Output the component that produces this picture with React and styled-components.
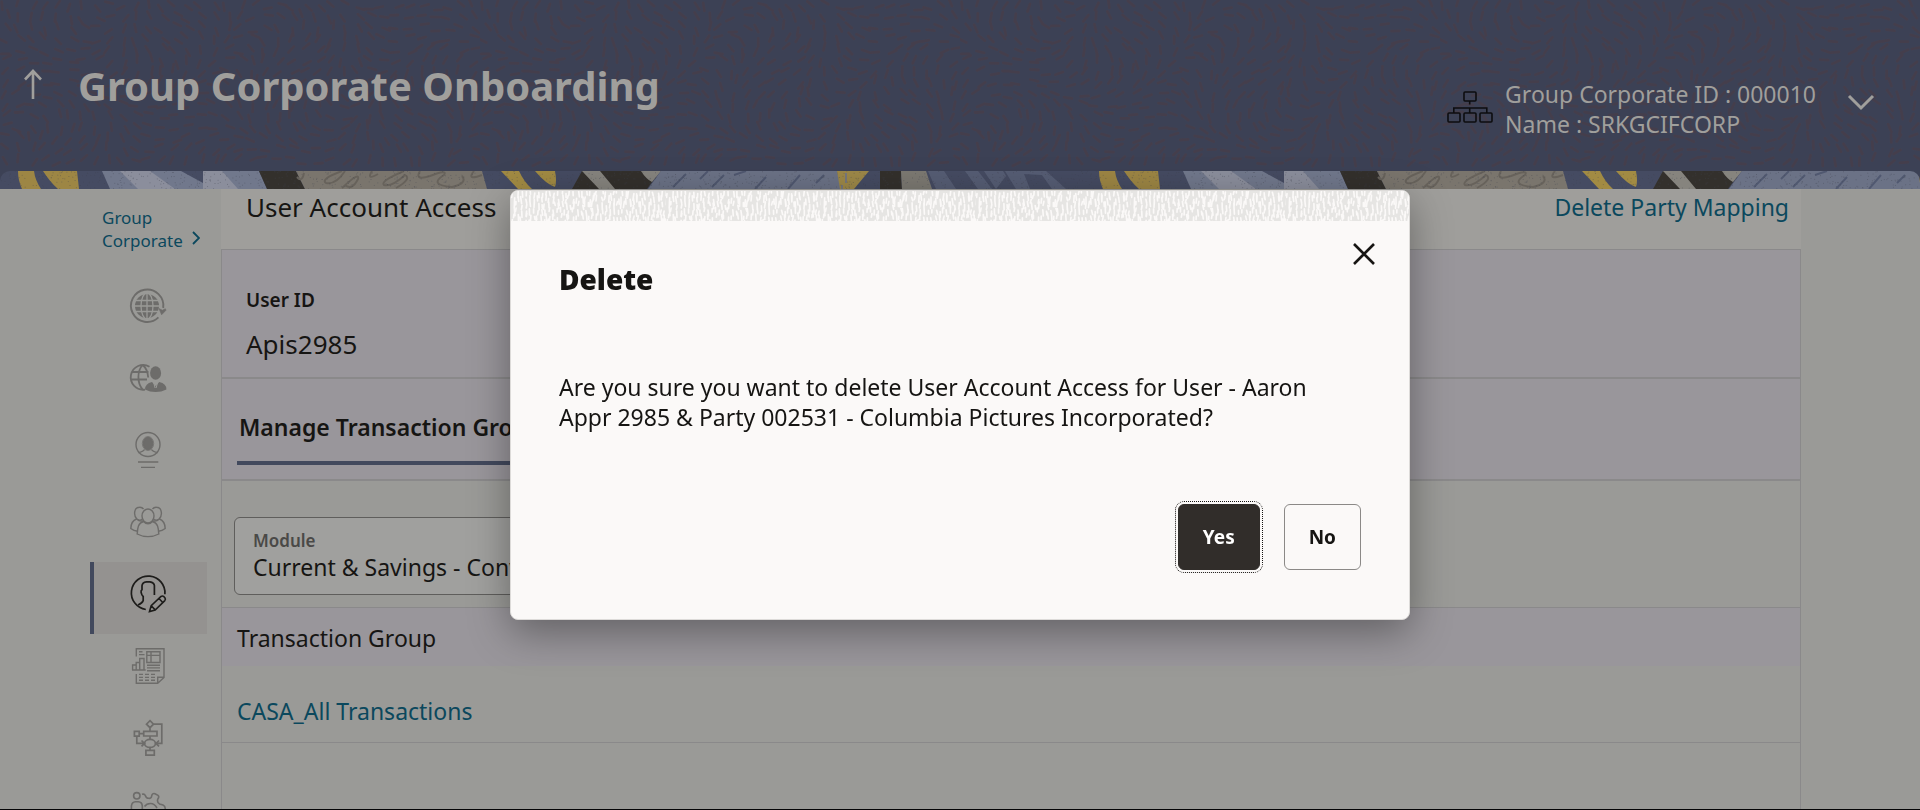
import React, { useState } from 'react';
import styled, { createGlobalStyle, ThemeProvider } from 'styled-components';

const theme = {
  color: {
    header: '#3c4155',
    onHeader: '#a09f9c',
    page: '#9a9a97',
    surface: '#9f9e9b',
    field: '#a0a09e',
    lilac: '#99969b',
    active: '#949290',
    line: '#8a898a',
    text: '#161513',
    muted: '#4a4947',
    icon: '#6d6c6a',
    link: '#0b485d',
    accent: '#42495d',
    dialog: '#fbf9f8',
    dark: '#312d2a',
  },
};

// small seeded generator, keeps the textures the same on every render
const random = (seed) => {
  let s = seed;
  return () => {
    s = (s * 16807) % 2147483647;
    return s / 2147483647;
  };
};

const headerStrokes = () => {
  const next = random(11);
  let d = '';
  for (let y = 6; y < 171; y += 11) {
    for (let x = 6; x < 480; x += 13) {
      const px = x + next() * 8 - 4;
      const py = y + next() * 8 - 4;
      const angle = Math.sin(x / 38) * 1.4 + Math.cos(y / 30 + x / 76) * 1.3;
      const dx = Math.cos(angle) * 4;
      const dy = Math.sin(angle) * 4;
      d += `M${(px - dx).toFixed(1)} ${(py - dy).toFixed(1)}L${(px + dx).toFixed(1)} ${(py + dy).toFixed(1)}`;
    }
  }
  return d;
};

const dialogStrokes = () => {
  const next = random(7);
  let d = '';
  for (let y = -2; y < 32; y += 6) {
    for (let x = 1; x < 155; x += 4) {
      const px = x + next() * 3;
      const py = y + next() * 5;
      const lean = next() * 2 - 1;
      d += `M${px.toFixed(1)} ${py.toFixed(1)}l${lean.toFixed(1)} ${(3 + next() * 4).toFixed(1)}`;
    }
  }
  return d;
};

const speckles = () => {
  const next = random(23);
  let d = '';
  for (let i = 0; i < 900; i += 1) {
    d += `M${(next() * 1081).toFixed(1)} ${(next() * 18).toFixed(1)}h1`;
  }
  return d;
};

const HeaderTexture = () => (
  <Texture width="100%" height="100%" aria-hidden="true">
    <defs>
      <pattern id="strokes" width="480" height="171" patternUnits="userSpaceOnUse">
        <path d={headerStrokes()} stroke="#443e4c" strokeWidth="2.8" strokeLinecap="round" />
      </pattern>
    </defs>
    <rect width="100%" height="100%" fill="url(#strokes)" />
  </Texture>
);

const BandArt = () => (
  <svg width="100%" height="18" aria-hidden="true">
    <defs>
      <pattern id="band" width="1081" height="18" patternUnits="userSpaceOnUse">
        <rect width="1081" height="18" fill="#454b62" />
        <path d="M18 0H34Q35 9 41 18H22Q18 9 18 0ZM43 0H77L79 18H58Q50 11 43 0Z" fill="#9d8644" />
        <path d="M102 0H259L267 18H110Z" fill="#71788c" />
        <path d="M120 0H150L175 18H138ZM203 0H222L238 18H203Z" fill="#8b8e9c" />
        <path d="M181 0H203V12Z" fill="#454b62" />
        <path d="M259 0H296L305 18H267Z" fill="#33302c" />
        <path d="M296 0H482L487 18H305Z" fill="#7a756d" />
        <g fill="none" stroke="#67625b" strokeWidth="2">
          <path d="M304 2Q302 12 297 6M345 0Q336 14 326 12Q320 8 342 0M342 17Q360 0 358 8Q352 20 345 14M372 0Q366 10 378 3M404 0Q380 10 384 14Q392 16 405 4Q412 8 396 17M420 0Q414 10 430 5Q448 -2 444 4Q428 14 452 16Q468 12 462 5M474 0Q466 10 482 4" />
        </g>
        <path d="M501 0H519Q524 11 532 18H518ZM535 0H555Q557 10 555 16Q546 13 535 0Z" fill="#a28b43" />
        <path d="M582 0H660L647 18H572Z" fill="#33302c" />
        <path d="M582 0H600L615 18H599ZM641 0H661L652 11Q646 8 641 0Z" fill="#86847e" />
        <path d="M661 0H837L841 18H648Z" fill="#6b7286" />
        <path d="M686 3L673 16M724 4L712 16M746 0L734 4M766 6L755 18M800 4L788 18M824 4L816 12M708 0L700 8" stroke="#505870" strokeWidth="2" />
        <path d="M837 0H869L854 18H840Z" fill="#9d8848" />
        <path d="M846 2V12M842 14V18" stroke="#77777c" strokeWidth="2" />
        <path d="M880 0H901L902 18H880Z" fill="#33302c" />
        <path d="M901 0H926L932 18H902Z" fill="#7c7972" />
        <path d="M928 0H944L956 18H936ZM965 0H978L992 18H978ZM984 0H1003L1006 5L996 18ZM1005 0H1046L1066 18H1052L1042 4L1024 3L1030 18H1016Z" fill="#565d74" />
        <path d={speckles()} stroke="#3a3d4a" strokeWidth="1" opacity="0.35" />
      </pattern>
    </defs>
    <rect width="100%" height="18" fill="url(#band)" />
  </svg>
);

const DialogBand = () => (
  <svg width="100%" height="30" aria-hidden="true">
    <defs>
      <pattern id="weave" width="155" height="30" patternUnits="userSpaceOnUse">
        <rect width="155" height="30" fill="#e6e5e3" />
        <path d={dialogStrokes()} stroke="#fbf9f8" strokeWidth="1.7" strokeLinecap="round" />
      </pattern>
    </defs>
    <rect width="100%" height="30" fill="url(#weave)" />
  </svg>
);

const OrgIcon = () => (
  <svg width="46" height="33" viewBox="0 0 46 33" fill="none" stroke="#0d0d0f" strokeWidth="1.6" aria-hidden="true">
    <rect x="17" y="2" width="12" height="9" rx="1" />
    <rect x="1" y="23" width="12" height="9" rx="1" />
    <rect x="17" y="23" width="12" height="9" rx="1" />
    <rect x="33" y="23" width="12" height="9" rx="1" />
    <path d="M22.7 11v3.4M6.8 23v-5h33v5M22.7 18v5" />
  </svg>
);

const icons = {
  globe: (
    <>
      <circle cx="17" cy="18" r="12" fill="currentColor" stroke="none" />
      <path d="M5 12.5h24M5 18h24M5 23.5h24M17 6v24" stroke="#9a9a97" strokeWidth="1.3" />
      <ellipse cx="17" cy="18" rx="6" ry="13" stroke="#9a9a97" strokeWidth="1.3" />
      <path d="M28.4 29.4A16.2 16.2 0 1 1 33.2 20" strokeWidth="1.9" />
      <path d="M29 20.6l3.400 1.600 3-1.400.6 1.400-4.400 4.600z" fill="currentColor" strokeWidth="0.6" />
    </>
  ),
  globeUser: (
    <>
      <path d="M19.5 6.7A12.4 12.4 0 1 0 15 29.6M12.6 5C7 11 7 23 12.6 29.6M12.6 5q5 4 5.6 12.5M2.5 12h16M1 19.5h16" strokeWidth="1.8" />
      <ellipse cx="25.6" cy="13" rx="5.500" ry="6.800" fill="currentColor" stroke="none" />
      <path d="M15 29.5q0-6 7-7.500l3.600 4 3.600-4q7.400 1.500 7.200 7.500-5 2.500-10.800 2.500T15 29.500z" fill="currentColor" stroke="none" />
      <path d="M23.500 22l1.600 6M27.700 22l-1.600 6" stroke="#9a9a97" strokeWidth="1" />
    </>
  ),
  profile: (
    <>
      <circle cx="18" cy="12.500" r="12" />
      <ellipse cx="18" cy="11.500" rx="4.600" ry="6" fill="currentColor" />
      <ellipse cx="18" cy="11.500" rx="5.700" ry="7" strokeWidth="0.7" />
      <path d="M14.500 17.500q-1 2-6 3.200M21.500 17.500q1 2 6 3.200M8 30h20.300M11 35.400h14" />
    </>
  ),
  group: (
    <>
      <ellipse cx="18" cy="12" rx="6" ry="7" />
      <path d="M13.500 17.500C8 19 7.600 24 7.200 30q5 2.600 10.800 2.600t10.800-2.600c-.4-6-.8-11-6.300-12.500q-4.500 4.600-9 0z" />
      <path d="M13.500 5Q12 3 9.500 3.200C3.500 3.500 3.500 12 7 15.200q2.300 1.600 5.300.3M22.500 5Q24 3 26.500 3.200c6 .3 6 8.800 2.500 12q-2.300 1.600-5.300.3" />
      <path d="M6.500 15Q1 17 .8 24.500q3 2.500 6.800 2.700M29.500 15q5.500 2 5.700 9.500-3 2.500-6.800 2.700M7 15q2.500 3 6 1.800M29 15q-2.500 3-6 1.800" />
    </>
  ),
  editUser: (
    <>
      <path d="M15.800 33.500A16.800 16.800 0 1 1 34.900 18.300" strokeWidth="1.700" />
      <path d="M24.400 19V9.500Q24 6.500 20 5.800h-3.500q-4.300.5-4.500 4v4q-1.200.5-.9 2.500.6 3 2.100 4.200v4Q12.500 27 8 29" strokeWidth="1.700" />
      <path d="M19.500 35.500l1.700-5.800L31 20.500q1.500-1 3 .2l1 1.200q.9 1.400-.2 2.700L25.200 34zM21.200 29.700l4 4.200M29 22.500l4 4.200" strokeWidth="1.600" />
    </>
  ),
  report: (
    <>
      <path d="M6.300 8.500V.8H34v28.700L27.700 35.300H6.300V26M27.700 35v-5.700h6" />
      <path d="M2.600 22v-5h3.600v5M6.200 17v-2.500h3.500V22M9.700 15v-4.500H14V22M2 22h13.700" />
      <path d="M16.800 3.800H30V14.500H16.800zM16.800 7.400H30M21 3.800v10.700M9 3.800h3.500M9 6.600h5.500M17 17.200h13M17 19.900h13M17 22.700h13" />
      <path d="M9 26.400h17M9 29.400h17M9 32.300h17" strokeDasharray="4 2" />
    </>
  ),
  flow: (
    <g strokeWidth="1.700">
      <path d="M20 .7L23.500 4.200 20 7.700 16.500 4.200zM20 8v3.400M13.700 11.400H27v4.600H13.700zM4.400 11.400h4.800v4.800H4.400zM9.200 13.700h4.500M20 16v3.400" />
      <ellipse cx="20" cy="23.400" rx="5.400" ry="4" />
      <path d="M23.500 4.200h8.300v19.200h-6.400M29 20.500l-3 2.900 3 2.900M6.800 16.200v7.200h7.800M11.500 20.500l3 2.900-3 2.900M20 27.400v3M15.900 30.400h8.400v4.800h-8.400z" />
    </g>
  ),
  teamSettings: (
    <g strokeWidth="1.600">
      <circle cx="6.800" cy="3.800" r="3.200" />
      <path d="M1.400 20v-6q.6-4 4-4.200h3q3.600.2 3.900 4.200v6" />
      <path d="M12 2.300q2.500-.8 3.300 1.200 1 3 3.400 2.800 2.600.4 3-2.400.5-3 3.300-2.200l3 1.600q1.500 1.200 0 3.400-1.500 3.200 1.500 5.200l3.500 1.100q2.500 1.200 2.200 4V20" />
      <path d="M14.500 14.500q2-3 6-3t6.500 4.500" />
    </g>
  ),
};

const navItems = [
  { icon: 'globe', label: 'Corporate profile' },
  { icon: 'globeUser', label: 'Party mapping' },
  { icon: 'profile', label: 'User profile' },
  { icon: 'group', label: 'User groups' },
  { icon: 'editUser', label: 'User account access' },
  { icon: 'report', label: 'Reports' },
  { icon: 'flow', label: 'Workflow' },
  { icon: 'teamSettings', label: 'Approval rules' },
];

const App = () => {
  const [open, setOpen] = useState(true);
  const [active, setActive] = useState('editUser');

  const onClose = () => {
    setOpen(false);
  };

  return (
    <ThemeProvider theme={theme}>
      <GlobalStyle />
      <Shell>
        <Header>
          <HeaderTexture />
          <TitleGroup>
            <PlainButton type="button" aria-label="Back to top">
              <svg width="20" height="32" viewBox="0 0 20 32" fill="none" stroke="currentColor" strokeWidth="2.600">
                <path d="M10 31V3M2 11.500L10 3l8 8.500" />
              </svg>
            </PlainButton>
            <PageTitle>Group Corporate Onboarding</PageTitle>
          </TitleGroup>
          <CorporateInfo>
            <OrgIcon />
            <InfoText>
              <div>Group Corporate ID : 000010</div>
              <div>Name : SRKGCIFCORP</div>
            </InfoText>
            <PlainButton type="button" aria-label="More details">
              <svg width="28" height="32" viewBox="0 0 28 32" fill="none" stroke="currentColor" strokeWidth="3">
                <path d="M2 11l12 12 12-12" />
              </svg>
            </PlainButton>
          </CorporateInfo>
        </Header>
        <BandWrap>
          <Band>
            <BandArt />
          </Band>
        </BandWrap>
        <Body>
          <SideNav>
            <NavLink href="#group">
              Group Corporate
              <svg width="8" height="14" viewBox="0 0 8 14" fill="none" stroke="currentColor" strokeWidth="1.800" aria-hidden="true">
                <path d="M1 1l6 6-6 6" />
              </svg>
            </NavLink>
            {navItems.map(({ icon, label }) => (
              <NavItem
                key={icon}
                type="button"
                aria-label={label}
                $active={active === icon}
                onClick={() => setActive(icon)}
              >
                <svg width="36" height="36" viewBox="0 0 36 36" fill="none" stroke="currentColor" strokeWidth="1.400" overflow="visible">
                  {icons[icon]}
                </svg>
              </NavItem>
            ))}
          </SideNav>
          <Content>
            <ContentHeader>
              <SectionTitle>User Account Access</SectionTitle>
              <TextLink href="#delete">Delete Party Mapping</TextLink>
            </ContentHeader>
            <Panel>
              <UserSection>
                <UserLabel>User ID</UserLabel>
                <UserValue>Apis2985</UserValue>
              </UserSection>
              <TabBar>
                <Tab type="button">Manage Transaction Groups</Tab>
              </TabBar>
              <Filter>
                <Field>
                  <label htmlFor="module">Module</label>
                  <select id="module">
                    <option>Current &amp; Savings - Conventional</option>
                  </select>
                </Field>
              </Filter>
              <Table>
                <thead>
                  <tr>
                    <th>Transaction Group</th>
                  </tr>
                </thead>
                <tbody>
                  <tr>
                    <td>
                      <TextLink href="#casa">CASA_All Transactions</TextLink>
                    </td>
                  </tr>
                </tbody>
              </Table>
            </Panel>
          </Content>
        </Body>
      </Shell>
      {open && (
        <Backdrop>
          <Dialog role="dialog" aria-labelledby="dialog-title">
            <DialogBand />
            <DialogHeader>
              <DialogTitle id="dialog-title">Delete</DialogTitle>
              <CloseButton type="button" aria-label="Close" onClick={onClose}>
                <svg width="24" height="24" viewBox="0 0 24 24" fill="none" stroke="currentColor" strokeWidth="2.600">
                  <path d="M2 2l20 20M22 2L2 22" />
                </svg>
              </CloseButton>
            </DialogHeader>
            <Message>
              Are you sure you want to delete User Account Access for User - Aaron
              Appr 2985 &amp; Party 002531 - Columbia Pictures Incorporated?
            </Message>
            <Actions>
              <PrimaryButton type="button" onClick={onClose}>
                Yes
              </PrimaryButton>
              <DialogButton type="button" onClick={onClose}>
                No
              </DialogButton>
            </Actions>
          </Dialog>
        </Backdrop>
      )}
    </ThemeProvider>
  );
};

export default App;

const GlobalStyle = createGlobalStyle`
  * {
    box-sizing: border-box;
  }

  body {
    margin: 0;
    background: ${(props) => props.theme.color.page};
    color: ${(props) => props.theme.color.text};
    font-family: 'Noto Sans', 'Open Sans', sans-serif;
    font-size: 23px;
    line-height: 30px;
  }

  button,
  select {
    font: inherit;
    color: inherit;
  }

  svg {
    display: block;
    flex: none;
  }
`;

const Shell = styled.div`
  display: flex;
  flex-direction: column;
  height: 100vh;
  overflow: hidden;
  border-bottom: 1px solid #050506;
`;

const Header = styled.header`
  position: relative;
  display: flex;
  flex: none;
  justify-content: space-between;
  align-items: flex-start;
  padding: 58px 45px 32px 23px;
  background-color: ${(props) => props.theme.color.header};
  color: ${(props) => props.theme.color.onHeader};
`;

const Texture = styled.svg`
  position: absolute;
  inset: 0;
`;

const TitleGroup = styled.div`
  position: relative;
  display: flex;
  align-items: flex-start;
  gap: 35px;
  padding-top: 10px;
`;

const PageTitle = styled.h1`
  margin: 0;
  font-size: 40px;
  font-weight: 700;
  line-height: 36px;
`;

const PlainButton = styled.button`
  padding: 0;
  border: none;
  background: none;
  cursor: pointer;
`;

const CorporateInfo = styled.div`
  position: relative;
  display: flex;
  align-items: flex-start;
  padding-top: 21px;

  > svg {
    margin-top: 11px;
  }

  ${PlainButton} {
    margin-left: 31px;
    padding-top: 6px;
  }
`;

const InfoText = styled.div`
  margin-left: 12px;
`;

const BandWrap = styled.div`
  flex: none;
  background-color: ${(props) => props.theme.color.header};
`;

const Band = styled.div`
  overflow: hidden;
  border-radius: 10px 10px 0 0;
`;

const Body = styled.div`
  display: flex;
  flex: 1;
  min-height: 0;
  padding: 0 119px 0 90px;
  overflow: hidden;
`;

const SideNav = styled.nav`
  flex: none;
  width: 117px;
  margin-right: 14px;
`;

const NavLink = styled.a`
  display: flex;
  align-items: flex-end;
  height: 85px;
  padding: 0 7px 22px 12px;
  color: ${(props) => props.theme.color.link};
  font-size: 17px;
  line-height: 23px;
  text-decoration: none;

  svg {
    margin: 0 0 7px 8px;
  }
`;

const NavItem = styled.button`
  display: flex;
  justify-content: center;
  align-items: flex-start;
  width: 100%;
  height: 72px;
  padding: 14px 5px 0 0;
  border: none;
  border-left: 4px solid ${(props) => (props.$active ? props.theme.color.accent : 'transparent')};
  background-color: ${(props) => (props.$active ? props.theme.color.active : 'transparent')};
  color: ${(props) => (props.$active ? '#1d1c1a' : props.theme.color.icon)};
  cursor: pointer;
`;

const Content = styled.main`
  display: flex;
  flex: 1;
  flex-direction: column;
  min-width: 0;
`;

const ContentHeader = styled.div`
  display: flex;
  flex: none;
  justify-content: space-between;
  align-items: center;
  padding: 0 12px 24px 25px;
  background-color: ${(props) => props.theme.color.surface};
`;

const SectionTitle = styled.h2`
  margin: 0;
  font-size: 26px;
  font-weight: 400;
  line-height: 36px;
`;

const TextLink = styled.a`
  color: ${(props) => props.theme.color.link};
  text-decoration: none;
`;

const Panel = styled.section`
  flex: 1;
  border: 1px solid ${(props) => props.theme.color.line};
  border-bottom: none;
`;

const UserSection = styled.div`
  padding: 38px 24px 17px;
  border-bottom: 2px solid ${(props) => props.theme.color.line};
  background-color: ${(props) => props.theme.color.lilac};
`;

const UserLabel = styled.div`
  margin-bottom: 16px;
  font-size: 19px;
  font-weight: 600;
  line-height: 24px;
`;

const UserValue = styled.div`
  font-size: 26px;
  line-height: 32px;
`;

const TabBar = styled.div`
  display: flex;
  padding: 33px 15px 14px;
  border-bottom: 2px solid ${(props) => props.theme.color.line};
  background-color: ${(props) => props.theme.color.lilac};
`;

const Tab = styled.button`
  padding: 0 2px 19px;
  border: none;
  border-bottom: 4px solid ${(props) => props.theme.color.accent};
  background: none;
  font-weight: 600;
  line-height: 30px;
  cursor: pointer;
`;

const Filter = styled.div`
  padding: 36px 12px 12px;
  border-bottom: 1px solid ${(props) => props.theme.color.line};
`;

const Field = styled.div`
  display: flex;
  flex-direction: column;
  width: 50%;
  padding: 13px 18px 11px;
  border: 1px solid #5f5e5c;
  border-radius: 6px;
  background-color: ${(props) => props.theme.color.field};

  label {
    color: ${(props) => props.theme.color.muted};
    font-size: 17px;
    font-weight: 600;
    line-height: 20px;
  }

  select {
    height: 32px;
    padding: 0;
    border: none;
    background: none;
    appearance: none;
  }
`;

const Table = styled.table`
  width: 100%;
  border-collapse: collapse;

  th {
    height: 58px;
    padding: 1px 15px 0;
    background-color: ${(props) => props.theme.color.lilac};
    font-weight: 400;
    text-align: left;
  }

  td {
    padding: 30px 15px 16px;
    border-bottom: 1px solid ${(props) => props.theme.color.line};
  }
`;

const Backdrop = styled.div`
  position: fixed;
  inset: 0;
  display: flex;
  justify-content: center;
  align-items: center;
`;

const Dialog = styled.section`
  width: 900px;
  max-width: 100%;
  overflow: hidden;
  border: 1px solid #dddbd9;
  border-radius: 8px;
  background-color: ${(props) => props.theme.color.dialog};
  box-shadow: 0 12px 40px rgba(0, 0, 0, 0.36);
`;

const DialogHeader = styled.div`
  display: flex;
  justify-content: space-between;
  align-items: flex-start;
  padding: 20px 33px 0 48px;
`;

const DialogTitle = styled.h2`
  margin: 18px 0 0;
  font-size: 28px;
  font-weight: 900;
  line-height: 40px;
`;

const CloseButton = styled(PlainButton)`
  padding-top: 1px;
`;

const Message = styled.p`
  margin: 73px 48px 72px;
`;

const Actions = styled.div`
  display: flex;
  justify-content: flex-end;
  gap: 24px;
  padding: 0 48px;
  margin-bottom: 49px;
`;

const DialogButton = styled.button`
  height: 66px;
  padding: 0 24px;
  border: 1px solid #8b8987;
  border-radius: 6px;
  background-color: transparent;
  font-size: 19px;
  font-weight: 700;
  cursor: pointer;
`;

const PrimaryButton = styled(DialogButton)`
  border-color: ${(props) => props.theme.color.dark};
  background-color: ${(props) => props.theme.color.dark};
  color: #fff;
  outline: 1px dotted #161513;
  outline-offset: 2px;
`;
